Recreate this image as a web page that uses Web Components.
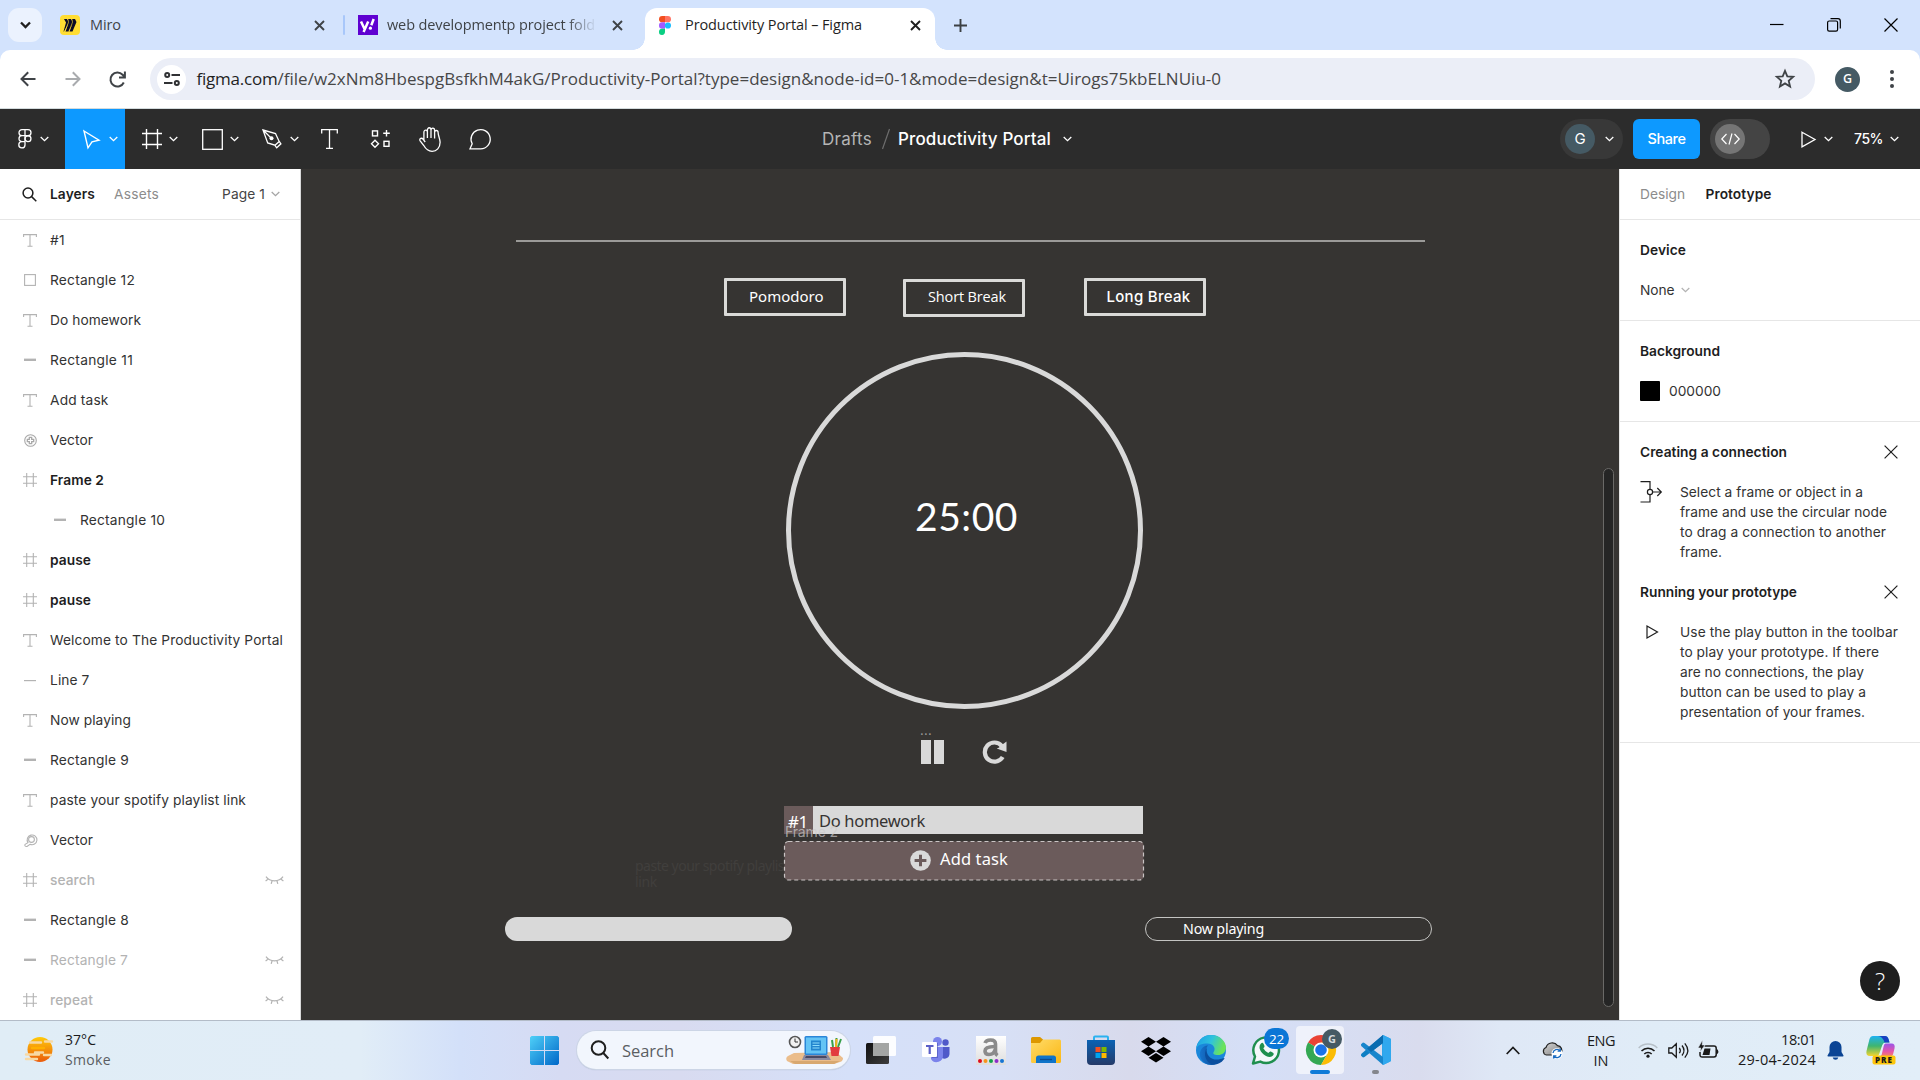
<!DOCTYPE html>
<html lang="en">
<head>
<meta charset="utf-8">
<title>Productivity Portal – Figma</title>
<style>
html,body{margin:0;padding:0;width:1920px;height:1080px;overflow:hidden;background:#fff}
</style>
</head>
<body>
<desktop-screen></desktop-screen>
<script>
const UI = '"Open Sans","Noto Sans",sans-serif';
const INTER = 'Inter,"Liberation Sans",sans-serif';
const NOTO = '"Noto Sans","Open Sans",sans-serif';
const FONTS = { ui: UI, inter: INTER, noto: NOTO, lato: 'Lato,sans-serif' };

/* Single line of text whose tracking is adjusted to a given advance width. */
class UiText extends HTMLElement {
  connectedCallback() {
    if (this.shadowRoot) return;
    const g = (n, d) => this.getAttribute(n) || d;
    const size = g('size', '14'), weight = g('weight', '400'), fam = FONTS[g('font', 'inter')];
    let ls = 0;
    const w = parseFloat(g('w', '0'));
    const t = this.textContent;
    if (w) {
      const c = UiText.ctx || (UiText.ctx = document.createElement('canvas').getContext('2d'));
      c.font = `${weight} ${size}px ${fam}`;
      ls = (w - c.measureText(t).width) / Math.max(1, t.length);
    }
    this.attachShadow({ mode: 'open' }).innerHTML = `<style>
      :host{display:block;flex:none;white-space:pre;line-height:20px;${w ? `width:${w}px;` : ''}
      font:${weight} ${size}px/20px ${fam};letter-spacing:${ls.toFixed(3)}px;${this.hasAttribute('color') ? `color:${g('color')}` : ''}}
      </style><slot></slot>`;
  }
}

const S = (c, w, d) => `<g fill="none" stroke="${c}" stroke-width="${w}">${d}</g>`;
const ICONS = {
  chev: [9, 6, S('currentColor', 1.3, '<path d="M.7 1 4.5 4.6 8.3 1"/>')],
  tabchev: [11, 8, S('#1f1f1f', 2.3, '<path d="M1 1.5 5.5 6 10 1.5"/>')],
  close: [11, 11, S('currentColor', 1.9, '<path d="M1 1 10 10M10 1 1 10"/>')],
  miro: [20, 20, '<rect width="20" height="20" rx="4" fill="#ffdd33"/><path d="M4 4h3l1.5 2L8 4h3l1.5 2L12 4h3l1.5 3-4 9.500h-3l3-8-4 8h-3l3-8.500-4.500 8.500H3.500l2.500-9z" fill="#0b0b26"/>' + S('#ffdd33', .6, '<path d="m7.600 4 1 3-3.500 9M11.600 4l1 3-3.500 9"/>')],
  yahoo: [20, 20, '<rect width="20" height="20" fill="#5f01d1"/>' + S('#fff', 2.5, '<path d="m3 6.500 3.300 7M10.200 6.500 5.600 17M15.700 4l-2.400 6.200"/>') + '<circle cx="12.400" cy="13.200" r="1.600" fill="#fff"/>'],
  figma: [12, 19, '<path d="M3.200 0H6v6.300H3.200a3.150 3.150 0 0 1 0-6.300z" fill="#f24e1e"/><path d="M6 0h2.800a3.150 3.150 0 0 1 0 6.300H6z" fill="#ff7262"/><path d="M3.200 6.300H6v6.400H3.200a3.200 3.200 0 0 1 0-6.400z" fill="#a259ff"/><circle cx="8.900" cy="9.500" r="3.100" fill="#1abcfe"/><path d="M3.200 12.700H6v3.100a3 3.100 0 1 1-2.800-3.100z" fill="#0acf83"/>'],
  plus: [13, 13, S('#3c4043', 1.9, '<path d="M6.500 0v13M0 6.500h13"/>')],
  wmin: [14, 14, S('#000', 1.2, '<path d="M0 6.500h13.500"/>')],
  wmax: [14, 14, S('#000', 1.2, '<rect x=".6" y="3" width="10" height="10.200" rx="1.600"/><path d="M3.500.7H11q2.300 0 2.300 2.300v7.500"/>')],
  wclose: [14, 14, S('#000', 1.2, '<path d="M.5.5 13.500 13.500M13.500.5.5 13.500"/>')],
  back: [16, 16, S('#3f4347', 2, '<path d="M15.500 8H1.800M8.200 1.200 1.500 8l6.700 6.800"/>')],
  fwd: [16, 16, S('#a9abae', 2, '<path d="M.5 8h13.700M7.800 1.200 14.500 8l-6.700 6.800"/>')],
  reload: [17, 17, S('#3f4347', 2, '<path d="M14.800 11.500A7 7 0 1 1 13.600 3.700L15.700 6M15.900.5v6H10"/>')],
  tune: [16, 14, S('#303134', 2, '<circle cx="3.200" cy="3" r="2"/><path d="M7.500 3H16M0 11h8.500"/><circle cx="12.800" cy="11" r="2"/>')],
  star: [20, 20, S('#3f4347', 1.8, '<path d="m10 1.800 2.300 5.500 5.900.5-4.500 3.900 1.400 5.800-5.100-3.100-5.100 3.100 1.400-5.800L1.800 7.800l5.900-.5z"/>')],
  dots: [4, 18, '<g fill="#3f4347"><circle cx="2" cy="2" r="2"/><circle cx="2" cy="9" r="2"/><circle cx="2" cy="16" r="2"/></g>'],
  flogo: [14, 20, S('#fff', 1.3, '<path d="M7 .7H4a2.900 2.900 0 0 0 0 6h3zM7 .7h3a2.900 2.900 0 0 1 0 6H7zM7 6.700H4a2.900 2.900 0 0 0 0 6h3zM7 12.700H4a3.100 3.100 0 1 0 3 3.200z"/><circle cx="10" cy="9.700" r="2.950"/>')],
  move: [17, 19, S('#fff', 1.4, '<path d="m1 1 15 9.200-7 1.600-4 6z"/>')],
  frame: [20, 20, S('#fff', 1.4, '<path d="M4.500 0v20M15.500 0v20M0 4.500h20M0 15.500h20"/>')],
  rect: [21, 21, S('#fff', 1.3, '<rect x=".7" y=".7" width="19.600" height="19.600"/>')],
  pen: [21, 20, S('#fff', 1.3, '<path d="m1 1 12.500 3.500 3.700 8-4.200 3.700-7.300-2.300zM1 1l7.800 7.800M17.400 12.600l1.500 2.200-4.200 4-2-2.600"/>') + '<circle cx="9.500" cy="9.300" r="2" fill="#fff"/>'],
  text: [17, 20, S('#fff', 1.3, '<path d="M.7 4.500V.7h15.600v3.800M8.500.7v18.600M5 19.300h7"/>')],
  res: [20, 18, S('#fff', 1.4, '<rect x="1.500" y=".9" width="5" height="5"/><path d="M15.500 0v6.600M12.200 3.300h6.600M4 10.300l3.500 3.500L4 17.300.5 13.800z"/><rect x="13" y="11.300" width="5" height="5"/>')],
  hand: [22, 25, S('#fff', 1.3, '<path d="M4.900 13V5.200c0-2.800 3.500-2.800 3.500 0V11 3c0-3 3.600-3 3.600 0v8V3.200c0-2.900 3.600-2.900 3.600 0V11.500 5.600c0-2.800 3.500-2.800 3.500 0 0 3 2 6.500 2 9.700 0 5.500-3.500 9-8 9-4 0-6.500-2.500-8.300-5.800L1 13.600c-1-2.200 1.800-3.300 3.200-1.300l2 2.700"/>')],
  comment: [22, 21, S('#fff', 1.3, '<path d="M3.200 14.800A9.600 9.600 0 1 1 11.700 19.800H1l2.200-5z"/>')],
  slash: [8, 20, S('#6e6e6e', 1.2, '<path d="M7.500 0 .5 20"/>')],
  code: [19, 12, S('#fff', 1.2, '<path d="M5.500 1 .8 6l4.700 5M13.500 1l4.700 5-4.700 5M11 .5 8 11.500"/>')],
  play: [15, 17, S('currentColor', 1.3, '<path d="M1 1.200 14 8.500 1 15.800z"/>')],
  mag: [15, 15, S('#1e1e1e', 1.5, '<circle cx="6" cy="6" r="4.900"/><path d="m9.600 9.600 4.700 4.700"/>')],
  lt: [14, 13, S('#b3b3b3', 1.1, '<path d="M.6 3V.6h12.800V3M7 .6v11.800M4.500 12.300h5"/>')],
  lsq: [12, 12, S('#b3b3b3', 1.1, '<rect x=".6" y=".6" width="10.800" height="10.800"/>')],
  lbar: [12, 4, '<rect y=".6" width="12" height="2.400" fill="#b3b3b3"/>'],
  lline: [12, 3, '<rect y="1" width="12" height="1.200" fill="#b3b3b3"/>'],
  lvec: [13, 13, S('#a8a8a8', 1.1, '<circle cx="6.500" cy="6.500" r="5.800"/><path d="M5.300 3.300h2.400v2h2v2.400h-2v2H5.300v-2h-2V5.300h2z" stroke-width="1.300"/>')],
  lhash: [14, 14, S('#b3b3b3', 1.1, '<path d="M3.700 0v14M10.300 0v14M0 3.700h14M0 10.300h14"/>')],
  lmag: [13, 13, S('#b3b3b3', 1.1, '<circle cx="7.500" cy="5.500" r="2.900"/><path d="M4 8.600a4.900 4.900 0 1 1 2 1.700l-3 2.100c-1.600.5-2.700-.9-1.900-2z"/>')],
  eye: [19, 8, S('#b3b3b3', 1.2, '<path d="M1 .7C5 6.200 14 6.200 18 .7M3.300 3 .6 5M7 5 6.200 7.800M12 5l.8 2.800M15.700 3l2.700 2"/>')],
  x: [14, 14, S('#1e1e1e', 1.2, '<path d="m.6.6 12.800 12.800M13.400.6.6 13.400"/>')],
  conn: [22, 22, S('#1e1e1e', 1.2, '<path d="M.5.700H10v7.600M10 13.700V21H.5M12.700 11h8.500M17.300 7l4 4-4 4"/><circle cx="10" cy="11" r="2.600"/>')],
  playsm: [13, 14, S('#1e1e1e', 1.2, '<path d="M1 1v12l10.500-6z"/>')],
  reset: [24, 24, S('#d9d9d9', 4.200, '<path d="M19.700 17A9.600 9.600 0 1 1 18.700 5.800"/>') + '<path d="M23.500 1.500v10.600l-9.800-3.600 2.500-1 .8-2.300 3.500-1.500z" fill="#d9d9d9"/>'],
  addc: [21, 21, '<circle cx="10.500" cy="10.500" r="10.300" fill="#d9d9d9"/><path d="M9 4.700h3V9h4.400v3H12v4.300H9V12H4.600V9H9z" fill="#6b5b5b"/>'],
  smoke: [28, 28, '<defs><linearGradient id="a" x2="0" y2="1"><stop stop-color="#ffca0a"/><stop offset="1" stop-color="#ea5b0c"/></linearGradient></defs><circle cx="15" cy="13.500" r="12.500" fill="url(#a)"/><g stroke="#f7d9a5" stroke-width="2.400" stroke-linecap="round"><path d="M5 6.500h11M20 5.500h7M10 16.500h8M1 18.500h13M19 19h7M1 23h11"/><path d="M7 12h12" stroke="#ffb000"/></g>'],
  start: [29, 29, '<defs><linearGradient id="a" x2="1" y2="1"><stop stop-color="#4fd0f8"/><stop offset="1" stop-color="#0067c8"/></linearGradient></defs><path d="M1.500 0H14v14H0V1.500zM15 0h12.500L29 1.500V14H15zM0 15h14v14H1.500L0 27.500zM15 15h14v12.500L27.500 29H15z" fill="url(#a)"/>'],
  wsearch: [20, 20, S('#1f1f1f', 2, '<circle cx="8.500" cy="8" r="6.800"/><path d="m13.300 13 5 5.500"/>')],
  desk: [58, 30, '<path d="m8 18 42-1 7 6q0 3-3 4l-6 2H7l-6-3q-2-3 1-5z" fill="#ebbd8b"/><path d="M4 26h50l-6 3H9z" fill="#d8a870"/><rect x="18.500" y="1" width="23" height="19" rx="1.500" fill="#2a86d8"/><rect x="20" y="2.500" width="20" height="16" fill="#64c4f5"/><rect x="25" y="5.500" width="10" height="10" fill="#2386cf"/><path d="M26.500 8h7M26.500 10.500h7M26.500 13h7" stroke="#8edcfb"/><path d="M18 20h24l3 5H16z" fill="#8a8aa0"/><path d="M20 21h20l1 2H19z" fill="#4a4963"/><circle cx="9" cy="7" r="5.500" fill="#f1f1f1" stroke="#555" stroke-width="1.600"/><path d="M9 3.500V7h3" stroke="#333" fill="none"/><path d="M44 12h10l-1.500 9h-7z" fill="#e23b3f"/><path d="m47 12-1-7M50 12l.5-9M52 12l3-8" stroke-width="2" stroke="#37a04a"/><path d="m50 12 .5-8" stroke="#f3b21b" stroke-width="2"/>'],
  taskview: [30, 30, '<defs><linearGradient id="a" x2="1" y2="1"><stop stop-color="#111"/><stop offset="1" stop-color="#3d3d3d"/></linearGradient></defs><rect y="8" width="23" height="21" rx="1.500" fill="url(#a)"/><rect x="7" y="1" width="23" height="20" rx="1.500" fill="#fff" opacity=".92"/><rect x="7" y="8" width="16" height="13" fill="#a3a5a4"/>'],
  teams: [28, 26, '<circle cx="15.500" cy="4.500" r="4.500" fill="#7b83eb"/><circle cx="23.500" cy="5.500" r="3.200" fill="#5059c9"/><path d="M18 10h9.500v7a5 5 0 0 1-7.500 4z" fill="#5059c9"/><path d="M9 10h12v8a6.500 6.500 0 0 1-12 4z" fill="#7b83eb"/><path d="M10 6h6v15h-6z" fill="#4249b0" opacity=".5"/><rect y="5" width="15" height="15" rx="1" fill="#fff"/><path d="M4 9h7.500M7.700 9v8" stroke="#5b5fc7" stroke-width="2.200"/>'],
  amz: [30, 29, '<defs><linearGradient id="a" x2="0" y2="1"><stop stop-color="#fff"/><stop offset="1" stop-color="#ddd"/></linearGradient></defs><rect width="30" height="29" fill="url(#a)"/><g fill="none" stroke="#8b8b8b" stroke-width="3.600"><path d="M9 7q1-3 5.500-3 5 0 5 4v8q0 2 2 3.500"/><path d="M19 10.500q-10 0-10 4.500 0 3.500 4 3.500 5 0 6-5"/></g><circle cx="4" cy="25" r="2" fill="#e00b1c"/><circle cx="9.500" cy="25" r="2" fill="#f7941d"/><circle cx="15" cy="25" r="2" fill="#13a34a"/><circle cx="20.500" cy="25" r="2" fill="#8e2ec9"/><circle cx="26" cy="25" r="2" fill="#1575d4"/>'],
  folder: [30, 26, '<defs><linearGradient id="a" x2="1" y2="1"><stop stop-color="#ffdc69"/><stop offset="1" stop-color="#fbb714"/></linearGradient></defs><path d="M0 1.500Q0 0 1.500 0H9l3 2.500V8H0z" fill="#dd9800"/><path d="M0 6h9l3-3.500h16.500Q30 2.500 30 4v20.500q0 1.500-1.500 1.500h-27Q0 26 0 24.500z" fill="url(#a)"/><path d="M5 26v-5q0-2.500 2.500-2.500h15q2.500 0 2.500 2.500v5z" fill="#0f74c9"/><path d="M9 22.500h12" stroke="#0b4b8f" stroke-width="1.300"/>'],
  store: [30, 30, '<defs><linearGradient id="a" x2="0" y2="1"><stop stop-color="#0a62b4"/><stop offset="1" stop-color="#253a68"/></linearGradient></defs><path d="M8 6V2.500Q8 1.500 9 1.500h12q1 0 1 1V6" fill="none" stroke="#2bb2f0" stroke-width="2"/><path d="M1 5h28v21q0 4-4 4H5q-4 0-4-4z" fill="url(#a)"/><path d="M9.500 12h5v5h-5z" fill="#f25022"/><path d="M15.500 12h5v5h-5z" fill="#7fba00"/><path d="M9.500 18h5v5h-5z" fill="#00a4ef"/><path d="M15.500 18h5v5h-5z" fill="#ffb900"/>'],
  dropbox: [30, 26, '<path d="m7.500 0 7.500 4.700-7.500 4.700L0 4.700zM22.500 0 30 4.700l-7.500 4.700L15 4.700zM7.500 9.500l7.500 4.800L7.500 19 0 14.300zM22.500 9.500l7.500 4.800-7.500 4.700-7.500-4.700zM15 16l7.500 4.700L15 25.500l-7.500-4.800z" fill="#000"/>'],
  edge: [30, 30, '<defs><linearGradient id="a" x2="1" y2=".3"><stop stop-color="#1a9be8"/><stop offset=".55" stop-color="#2fc3dc"/><stop offset="1" stop-color="#6be35a"/></linearGradient><linearGradient id="b" x2="1"><stop stop-color="#1673cc"/><stop offset="1" stop-color="#0c4a96"/></linearGradient></defs><circle cx="15" cy="15" r="15" fill="#1a87da"/><path d="M0 14.500C1 6 7 0 15 0c9 0 15 6.500 15 12.500 0 5-4 7.500-8 7.500-4.500 0-5.500-1.500-4.200-3.200 2.500-4-1-8.300-6.300-8.300C6 8.500 1 10 0 14.500z" fill="url(#a)"/><path d="M10.500 13.500C8 21 13 29 21 28.800 15 31.500 6 29.500 4 21c-1-5 3-11 8-10.500-1 .8-1.300 2-1.500 3z" fill="url(#b)"/><path d="M10.800 13c-1.500 7 4.700 12.500 11.700 11.500 2.500-.4 4.500-1.300 5.500-1.500.9 0 .4.800 0 1.300C25 28.500 20 30 17 29.500 9.500 28 7 18.500 10.800 13z" fill="#0b4f9e"/>'],
  wa: [30, 30, '<path d="M2 28.500 4 21.500A12.800 12.800 0 1 1 9.300 26.600z" fill="#f4f8fb" stroke="#1f8f4e" stroke-width="2.500" stroke-linejoin="round"/><path d="M10 8.500q1.500-1.500 2.500.3l1 2.200q.3 1-1.200 2.300 2 3.700 5 4.700 1.500-2 2.500-1.400l2.200 1.200q1.400.8 0 2.700-2.500 2.800-7 .5-5-2.700-6.300-7.200-.7-3.500 1.300-5.300z" fill="#1f8f4e"/>'],
  chrome: [30, 30, '<path d="M15 15 2 7.500A15 15 0 0 1 28 7.500L15 8z" fill="#ea4335"/><path d="M15 15 2 7.500A15 15 0 0 0 15 30l6.500-11.300z" fill="#34a853"/><path d="M15 15l6.500 3.700L15 30A15 15 0 0 0 28 7.500H15z" fill="#fbbc04"/><circle cx="15" cy="15" r="7.500" fill="#fff"/><circle cx="15" cy="15" r="5.800" fill="#1a73e8"/>'],
  vscode: [30, 30, '<path d="m22 0 7 3.300q1 .6 1 1.700v20q0 1.100-1 1.700L22 30l-1-3.500v-23z" fill="#2ba4ea"/><path d="M22 0v8L3.500 22 2 22.500 0 20.700l.2-1.700z" fill="#0f7fc4"/><path d="M22 30v-8L3.500 8 2 7.500 0 9.300l.2 1.700z" fill="#1785cc"/><path d="M22 0v8L10 17 6 13.500z" fill="#0a6cb0"/><path d="M22 0 30 4v22l-8 4z" fill="#30a8ee"/>'],
  up: [14, 9, S('#1a1a1a', 1.700, '<path d="m.7 8 6.300-6.500L13.300 8"/>')],
  cloud: [21, 18, '<defs><linearGradient id="a" x2="1" y2="1"><stop stop-color="#d6d6d6"/><stop offset="1" stop-color="#7f7f7f"/></linearGradient></defs><path d="M4.500 14A3.900 3.900 0 0 1 4 6.500 6.500 6.500 0 0 1 15.500 4.600 4.700 4.700 0 0 1 19 12l-2 2z" fill="url(#a)" stroke="#222" stroke-width="1.200"/><circle cx="15" cy="12.500" r="5.500" fill="#fff"/>' + S('#1769c0', 1.300, '<path d="M11 12a4 4 0 0 1 7-2.200M19 13a4 4 0 0 1-7 2.200M18.300 7.500v2.700h-2.700M11.700 17.500v-2.700h2.700"/>')],
  wifi: [20, 15, S('#b7c0c8', 1.500, '<path d="M.7 5a13 13 0 0 1 18.600 0"/>') + S('#1a1a1a', 1.500, '<path d="M3.500 8a9 9 0 0 1 13 0M6.300 11a5.200 5.200 0 0 1 7.400 0"/>') + '<circle cx="10" cy="13.200" r="1.600" fill="#1a1a1a"/>'],
  vol: [21, 17, S('#1a1a1a', 1.300, '<path d="M.8 6h3l4.500-4.200v13.400L3.800 11h-3zM11.300 5.800q2 2.700 0 5.400M14 3.500q4 5 0 10M16.800 1.300q6 7.200 0 14.400"/>')],
  bat: [21, 18, S('#1a1a1a', 1.500, '<path d="M6.500 5H16q2.200 0 2.200 2.200v6.600q0 2.200-2.200 2.200H4.200Q2 16 2 13.800V11"/>') + '<path d="M18.500 8.500h1.200q1.300 2 0 4.300h-1.200zM6.500 7.500h6l-1 6.500h-7z" fill="#1a1a1a"/><path d="M4.500-1 0 7h2.800L2 11l5-7H4.200z" fill="#1a1a1a" stroke="#e2ecf7" stroke-width=".6"/>'],
  bell: [17, 19, '<path d="M8.500 0a6 6 0 0 1 6 6v5l2 3.500q.3 1-.8 1H1.300q-1.100 0-.8-1l2-3.500V6a6 6 0 0 1 6-6zM5.700 16.500h5.600q-.5 2.300-2.800 2.300t-2.800-2.300z" fill="#0b4494"/>'],
  copilot: [30, 29, '<defs><linearGradient id="a" x2="0" y2="1"><stop stop-color="#1db2f2"/><stop offset=".5" stop-color="#3fb56f"/><stop offset="1" stop-color="#f3d530"/></linearGradient><linearGradient id="b" x2="0" y2="1"><stop stop-color="#9a55e8"/><stop offset=".6" stop-color="#e755a8"/><stop offset="1" stop-color="#f58a5c"/></linearGradient></defs><path d="M7 0h12q2.500 0 3.500 3l1 3.500h-4q-2.500 0-3.300 2.700L13 18.500q-.7 1.500-2.500 1.500H4q-4.500 0-3.500-5L3.500 3Q4.500 0 7 0z" fill="url(#a)"/><path d="M12 0h7q2.500 0 3.500 3l1 3.500h-5q-2-6.500-6.500-6.500z" fill="#1840c0"/><path d="M19.500 7.500h6q4 0 3 5L27 18.500q-1 2.500-3.500 2.500H13q2 0 2.700-2.500l2-8.500q.5-2.500 1.800-2.500z" fill="url(#b)"/><rect x="6.500" y="19.500" width="23" height="9" rx="2" fill="#fdc60b"/>'],
};
class UiIcon extends HTMLElement {
  connectedCallback() {
    if (this.shadowRoot) return;
    const [w, h, body] = ICONS[this.getAttribute('name')];
    this.attachShadow({ mode: 'open' }).innerHTML =
      `<style>:host{display:block;flex:none;width:${w}px;height:${h}px}svg{display:block;overflow:visible}</style>
       <svg width="${w}" height="${h}" viewBox="0 0 ${w} ${h}">${body}</svg>`;
  }
}

const component = (tag, css, html) => customElements.define(tag, class extends HTMLElement {
  connectedCallback() {
    if (this.shadowRoot) return;
    const t = document.createElement('template');
    t.innerHTML = `<style>*{box-sizing:border-box}:host{box-sizing:border-box}${css}</style>${typeof html === 'function' ? html(this) : html}`;
    this.attachShadow({ mode: 'open' }).append(t.content.cloneNode(true));
  }
});

customElements.define('ui-text', UiText);
customElements.define('ui-icon', UiIcon);

component('user-badge', `:host{display:grid;place-items:center;flex:none;border-radius:50%;background:#455a64;color:#fff}`, '<slot></slot>');

component('browser-tabs', `
:host{display:flex;height:50px;background:#d3e3fd;align-items:center;padding-left:8px;color:#3f4347}
.find{width:34px;height:34px;border-radius:11px;background:#ebf2fe;display:grid;place-items:center}
.tab{display:flex;align-items:center;height:34px}
.t1{width:283px;padding-left:18px}
.t1 ui-text{margin:0 auto 0 10px}
.sep{width:2px;height:20px;background:#a8c7fa;border-radius:1px;margin-left:18px}
.fade{width:210px;overflow:hidden;margin:0 15px 0 9px;-webkit-mask:linear-gradient(90deg,#000 180px,transparent 210px);mask:linear-gradient(90deg,#000 180px,transparent 210px)}
.t2{padding-left:13px;width:300px}
.active{position:relative;align-self:flex-end;height:42px;width:290px;background:#fff;border-radius:12px 12px 0 0;padding:0 14px 8px;color:#1f1f1f}
.active:before,.active:after{content:"";position:absolute;bottom:0;width:12px;height:12px}
.active:before{left:-12px;background:radial-gradient(circle at 0 0,transparent 11.5px,#fff 12px)}
.active:after{right:-12px;background:radial-gradient(circle at 100% 0,transparent 11.500px,#fff 12px)}
.active ui-text{margin:0 auto 0 14px}
.new{margin-left:19px}
.win{display:flex;gap:43px;margin:0 22px 0 auto}`,
`<div class="find"><ui-icon name="tabchev"></ui-icon></div>
<div class="tab t1"><ui-icon name="miro"></ui-icon><ui-text font="ui" size="14.500" w="31">Miro</ui-text><ui-icon name="close"></ui-icon></div>
<div class="sep"></div>
<div class="tab t2"><ui-icon name="yahoo"></ui-icon><div class="fade"><ui-text font="ui" size="14.500" w="208">web developmentp project fold</ui-text></div><ui-icon name="close"></ui-icon></div>
<div class="tab active"><ui-icon name="figma"></ui-icon><ui-text font="ui" size="14.500" w="177">Productivity Portal – Figma</ui-text><ui-icon name="close"></ui-icon></div>
<ui-icon class="new" name="plus"></ui-icon>
<div class="win"><ui-icon name="wmin"></ui-icon><ui-icon name="wmax"></ui-icon><ui-icon name="wclose"></ui-icon></div>`);

component('address-bar', `
:host{display:block;background:#d3e3fd;height:59px}
.bar{height:59px;background:#fff;border-radius:10px 10px 0 0;border-bottom:1px solid #d3dbdd;display:flex;align-items:center;padding:0 26px 0 20px}
.nav{display:flex;gap:28.500px;width:130px}
.box{display:flex;align-items:center;height:42px;width:1665px;border-radius:21px;background:#ebeef7;padding:0 20px 0 7px}
.site{width:29px;height:29px;border-radius:50%;background:#fff;display:grid;place-items:center;margin-right:10.500px}
.url{display:flex;color:#474747}
ui-icon[name=star]{margin-left:auto}
user-badge{width:25px;height:25px;margin-left:20px}
ui-icon[name=dots]{margin-left:auto}`,
`<div class="bar"><div class="nav"><ui-icon name="back"></ui-icon><ui-icon name="fwd"></ui-icon><ui-icon name="reload"></ui-icon></div>
<div class="box"><div class="site"><ui-icon name="tune"></ui-icon></div>
<div class="url"><ui-text font="ui" size="17" w="81" color="#1f1f1f">figma.com</ui-text><ui-text font="ui" size="17" w="943.500">/file/w2xNm8HbespgBsfkhM4akG/Productivity-Portal?type=design&amp;node-id=0-1&amp;mode=design&amp;t=Uirogs75kbELNUiu-0</ui-text></div>
<ui-icon name="star"></ui-icon></div>
<user-badge><ui-text font="ui" size="12.500" weight="600">G</ui-text></user-badge><ui-icon name="dots"></ui-icon></div>`);

component('tool-button', `
:host{display:flex;width:60px;height:60px;align-items:center;justify-content:center;gap:7px;color:#fff;padding-left:10px}
:host([solo]){width:50px;padding:0}
:host([icon=text]){padding-right:2px}
:host([icon=res]){padding-left:2px}
:host([logo]){width:65px;padding-left:18px;justify-content:flex-start;gap:8px}
:host([active]){background:#0d99ff;padding-left:10px;gap:9px}`,
el => `<ui-icon name="${el.getAttribute('icon')}"></ui-icon>${el.hasAttribute('solo') ? '' : '<ui-icon name="chev"></ui-icon>'}`);

component('figma-toolbar', `
:host{display:flex;height:60px;background:#2c2c2c;color:#fff;align-items:center}
.tools,.file,.right{display:flex;align-items:center}
.tools{width:822px}
.file ui-icon[name=slash]{margin:0 8px 0 10px}.file ui-icon[name=chev]{margin-left:12px}
.right{margin-left:auto;padding-right:21px}
.who{width:63px;height:40px;border-radius:20px;background:#383838;display:flex;align-items:center;padding-left:5px;gap:10px}
user-badge{width:30px;height:30px}
.share{width:67px;height:40px;border-radius:6px;background:#0d99ff;display:grid;place-items:center;margin:0 10px}
.dev{width:60px;height:40px;border-radius:20px;background:#444;padding:5px;margin-right:31px}
.knob{width:30px;height:30px;border-radius:50%;background:#757575;display:grid;place-items:center}
.right>ui-icon[name=play]{margin-right:8px}.right>ui-text{margin:0 7px 0 21px}`,
`<div class="tools"><tool-button logo icon="flogo"></tool-button><tool-button active icon="move"></tool-button><tool-button icon="frame"></tool-button><tool-button icon="rect"></tool-button><tool-button icon="pen"></tool-button><tool-button solo icon="text"></tool-button><tool-button solo icon="res"></tool-button><tool-button solo icon="hand"></tool-button><tool-button solo icon="comment"></tool-button></div>
<div class="file"><ui-text size="17" w="50" color="#b5b5b5">Drafts</ui-text><ui-icon name="slash"></ui-icon><ui-text size="17" weight="500" w="153">Productivity Portal</ui-text><ui-icon name="chev"></ui-icon></div>
<div class="right"><div class="who"><user-badge><ui-text size="15">G</ui-text></user-badge><ui-icon name="chev"></ui-icon></div>
<div class="share"><ui-text size="14.500" weight="500" w="38">Share</ui-text></div>
<div class="dev"><div class="knob"><ui-icon name="code"></ui-icon></div></div>
<ui-icon name="play"></ui-icon><ui-icon name="chev"></ui-icon><ui-text size="14" weight="500" w="29">75%</ui-text><ui-icon name="chev"></ui-icon></div>`);

component('layer-row', `
:host{display:flex;height:40px;align-items:center;padding:0 16px 0 20px;color:#333}
:host([frame]){color:#1e1e1e}
:host([nested]){padding-left:50px}
:host([off]){color:#b3b3b3}
.ic{width:20px;display:grid;place-items:center;margin-right:10px}
ui-icon[name=eye]{margin-left:auto}`,
el => `<div class="ic"><ui-icon name="${el.getAttribute('icon')}"></ui-icon></div>
<ui-text size="13.750" weight="${el.hasAttribute('frame') ? (el.hasAttribute('off') ? 500 : 600) : 400}" w="${el.getAttribute('w')}">${el.getAttribute('label')}</ui-text>${el.hasAttribute('off') ? '<ui-icon name="eye"></ui-icon>' : ''}`);

const LAYERS = [
  ['lt', '#1', 15], ['lsq', 'Rectangle 12', 85], ['lt', 'Do homework', 91], ['lbar', 'Rectangle 11', 83],
  ['lt', 'Add task', 58.500], ['lvec', 'Vector', 43], ['lhash', 'Frame 2', 54, 'frame'], ['lbar', 'Rectangle 10', 85, 'nested'],
  ['lhash', 'pause', 41, 'frame'], ['lhash', 'pause', 41, 'frame'], ['lt', 'Welcome to The Productivity Portal', 233],
  ['lline', 'Line 7', 39.500], ['lt', 'Now playing', 81], ['lbar', 'Rectangle 9', 79], ['lt', 'paste your spotify playlist link', 196],
  ['lmag', 'Vector', 43], ['lhash', 'search', 45, 'frame off'], ['lbar', 'Rectangle 8', 79], ['lbar', 'Rectangle 7', 78, 'off'],
  ['lhash', 'repeat', 43, 'frame off']];
component('layers-panel', `
:host{display:flex;flex-direction:column;width:301px;background:#fff;border-right:1px solid #d9d9d9;overflow:hidden}
header{display:flex;align-items:center;height:51px;border-bottom:1px solid #e6e6e6;padding:0 20px 0 22px;flex:none}
header ui-text:nth-of-type(1){margin-left:13px}
header ui-text:nth-of-type(2){margin-left:19px}
header ui-text:nth-of-type(3){margin:0 6px 0 auto}
header ui-icon[name=chev]{color:#a5a5a5}`,
`<header><ui-icon name="mag"></ui-icon><ui-text size="13.750" weight="600" w="45" color="#1e1e1e">Layers</ui-text><ui-text size="13.750" w="45" color="#8c8c8c">Assets</ui-text><ui-text size="13.750" w="43" color="#444">Page 1</ui-text><ui-icon name="chev"></ui-icon></header>`
+ LAYERS.map(([i, l, w, f = '']) => `<layer-row icon="${i}" label="${l}" w="${w}" ${f}></layer-row>`).join(''));

component('tip-card', `
:host{display:block}
.h{display:flex;align-items:center;justify-content:space-between;height:20px}
.b{display:flex;margin-top:20px}
.i{width:40px;flex:none;height:20px;display:flex;align-items:center}`,
el => `<div class="h"><ui-text size="13.750" weight="600" color="#1e1e1e" w="${el.getAttribute('w')}">${el.getAttribute('heading')}</ui-text><ui-icon name="x"></ui-icon></div>
<div class="b"><div class="i"><slot name="icon"></slot></div><div><slot></slot></div></div>`);

component('prototype-panel', `
:host{display:block;width:301px;background:#fff;border-left:1px solid #e6e6e6;color:#333}
section{border-bottom:1px solid #e6e6e6;padding:20px}
.tabs{display:flex;height:51px;padding:0 0 0 20px;align-items:center;gap:20.500px}
.group{height:101px;display:flex;flex-direction:column;gap:20px}
.group>div{display:flex;align-items:center;height:20px}
.group ui-icon{margin-left:6px;color:#b3b3b3}
.sw{width:20px;height:20px;background:#000;margin-right:9px;border-radius:1px}
.tips{height:321px;display:flex;flex-direction:column;gap:20px;padding:20px 22px 20px 20px}`,
`<section class="tabs"><ui-text size="13.750" w="45" color="#8c8c8c">Design</ui-text><ui-text size="13.750" weight="600" w="66" color="#1e1e1e">Prototype</ui-text></section>
<section class="group"><div><ui-text size="13.750" weight="600" w="46" color="#1e1e1e">Device</ui-text></div><div><ui-text size="13.750" w="34.500">None</ui-text><ui-icon name="chev"></ui-icon></div></section>
<section class="group"><div><ui-text size="13.750" weight="600" w="80" color="#1e1e1e">Background</ui-text></div><div><div class="sw"></div><ui-text size="13.750" w="52">000000</ui-text></div></section>
<section class="tips">
<tip-card heading="Creating a connection" w="147"><ui-icon slot="icon" name="conn"></ui-icon>
<ui-text size="13.750" w="183">Select a frame or object in a</ui-text><ui-text size="13.750" w="207">frame and use the circular node</ui-text><ui-text size="13.750" w="206">to drag a connection to another</ui-text><ui-text size="13.750" w="42">frame.</ui-text></tip-card>
<tip-card heading="Running your prototype" w="157"><ui-icon slot="icon" name="playsm" style="margin-left:5.500px"></ui-icon>
<ui-text size="13.750" w="218">Use the play button in the toolbar</ui-text><ui-text size="13.750" w="199">to play your prototype. If there</ui-text><ui-text size="13.750" w="184">are no connections, the play</ui-text><ui-text size="13.750" w="186">button can be used to play a</ui-text><ui-text size="13.750" w="185">presentation of your frames.</ui-text></tip-card>
</section>`);

/* Free canvas: coordinates below are relative to the canvas' own origin. */
component('design-canvas', `
:host{display:block;position:relative;width:1318px;height:851px;background:#363432;overflow:hidden;color:#fff}
.rule,.btn,.ring,.bar,.task,.num,.scroll,.pill,svg,ui-text,ui-icon{position:absolute}
.rule{left:215px;top:71px;width:909px;height:2px;background:#9b9a98}
.btn{width:122px;height:38px;border:3px solid #dadad8;border-radius:1px}
.ring{left:485px;top:183px;width:357px;height:357px;border:5.500px solid #d9d9d9;border-radius:50%}
.bar{top:571px;width:10px;height:24px;background:#d9d9d9}
.task{left:512px;top:637px;width:330px;height:28px;background:#d9d9d9}
.num{left:483px;top:637px;width:29px;height:28px;background:#6b5b5b}
.pill{top:748px;height:24px;border-radius:12px}
.scroll{left:1302px;top:299px;width:11px;height:539px;border:1.500px solid #6a6967;border-radius:6px;background:#252525}
svg{left:482px;top:671px}`,
`<div class="rule"></div>
<div class="btn" style="left:423px;top:109px"></div><div class="btn" style="left:602px;top:110px"></div><div class="btn" style="left:783px;top:109px"></div>
<ui-text style="left:448px;top:117px" font="noto" size="15" w="74.500">Pomodoro</ui-text>
<ui-text style="left:627px;top:117.500px" font="ui" size="14.500" w="78">Short Break</ui-text>
<ui-text style="left:805.500px;top:118px" font="inter" size="15" weight="500" w="84">Long Break</ui-text>
<div class="ring"></div>
<ui-text style="left:614px;top:337px" font="lato" weight="400" size="39" w="103">25:00</ui-text>
<ui-text style="left:619px;top:551px" font="inter" size="13" w="12" color="#999">...</ui-text>
<div class="bar" style="left:620px"></div><div class="bar" style="left:633px"></div>
<ui-icon style="left:681.500px;top:571px" name="reset"></ui-icon>
<ui-text style="left:334px;top:687px" font="noto" size="14" w="149" color="#413f3d">paste your spotify playlis</ui-text>
<ui-text style="left:334px;top:703px" font="noto" size="14" w="22" color="#413f3d">link</ui-text>
<div class="num"></div><div class="task"></div>
<ui-text style="left:487px;top:642.500px" font="noto" size="17" w="19.500">#1</ui-text>
<ui-text style="left:518px;top:641.500px" font="noto" size="16.500" w="106" color="#363432">Do homework</ui-text>
<ui-text style="left:484px;top:653px" font="inter" size="14" w="53" color="rgba(205,203,203,.7)">Frame 2</ui-text>
<svg width="362" height="42"><rect x="1.500" y="1.500" width="359" height="38.500" rx="4" fill="#6b5b5b" stroke="#c9c4c4" stroke-width="1.200" stroke-dasharray="4 3"/></svg>
<ui-icon style="left:608.500px;top:681px" name="addc"></ui-icon>
<ui-text style="left:639px;top:680px" font="noto" size="16.500" w="68">Add task</ui-text>
<div class="pill" style="left:204px;width:287px;background:#d9d9d9"></div>
<div class="pill" style="left:843.500px;width:287.500px;border:1.300px solid #c4c4c2"></div>
<ui-text style="left:882px;top:749.500px" font="noto" size="14.250" w="81">Now playing</ui-text>
<div class="scroll"></div>`);

component('task-app', `
:host{display:grid;place-items:center;width:55px;height:60px;position:relative}
:host([open]):before{content:"";position:absolute;left:3px;top:6px;width:48px;height:48px;border-radius:4px;background:rgba(255,255,255,.6)}
ui-icon{position:relative}
:host([open]):after{content:"";position:absolute;left:17px;bottom:6px;width:20px;height:4px;border-radius:2px;background:#0f7bd8}
:host([idle]):after{content:"";position:absolute;left:24px;bottom:6px;width:7px;height:4px;border-radius:2px;background:#84868c}`,
el => `<ui-icon name="${el.getAttribute('icon')}"></ui-icon><slot></slot>`);

component('windows-taskbar', `
:host{display:flex;height:60px;align-items:center;box-shadow:inset 0 1px #b3bcc8;background:linear-gradient(90deg,#e0edf6 0,#e1edf7 360px,#d3e0f9 460px,#d6dbf3 560px,#d8dbf0 680px,#d5e0f9 850px,#d7e0f6 1000px,#d8daec 1130px,#d5dff7 1250px,#d9dcee 1420px,#dfe8f6 1500px,#e0ecf7 1650px,#e2eef8 1920px);color:#1b1b1b}
.weather{display:flex;align-items:center;padding-left:25px;width:530px;gap:12px}
.search{display:flex;align-items:center;width:273px;height:38px;border-radius:19px;background:#f2f6fd;box-shadow:0 0 0 1px #ccd5e6,0 1px 1px #9aa8bd;margin:0 3px 0 18px;padding:0 6px 0 13px}
.search ui-text{margin:1px 0 0 12px}.search ui-icon[name=desk]{margin-left:auto}
.apps{display:flex}
.badge{position:absolute;left:26px;top:8px;height:21px;width:25px;border-radius:11px;background:#0a76d6;color:#fff;display:grid;place-items:center}
user-badge{position:absolute;left:29px;top:9px;width:20px;height:20px}
.tray{display:flex;align-items:center;margin-left:auto;padding-right:24px}
.c{display:flex;flex-direction:column;align-items:center;padding-top:1px}.r{display:flex;flex-direction:column;align-items:flex-end}
.co{position:relative}.co ui-text{position:absolute;left:9px;top:14px}`,
`<div class="weather"><ui-icon name="smoke"></ui-icon><div><ui-text font="ui" size="14" w="31">37°C</ui-text><ui-text font="ui" size="14" w="46" color="#5a5d62">Smoke</ui-text></div></div>
<ui-icon name="start"></ui-icon>
<div class="search"><ui-icon name="wsearch"></ui-icon><ui-text font="ui" size="16.500" w="52" color="#5b5e63">Search</ui-text><ui-icon name="desk"></ui-icon></div>
<div class="apps"><task-app icon="taskview"></task-app><task-app icon="teams"></task-app><task-app icon="amz"></task-app><task-app icon="folder"></task-app><task-app icon="store"></task-app><task-app icon="dropbox"></task-app><task-app icon="edge"></task-app>
<task-app icon="wa"><div class="badge"><ui-text font="ui" size="13.500" w="15">22</ui-text></div></task-app>
<task-app icon="chrome" open><user-badge><ui-text font="ui" size="11" weight="700" color="#d5dadd">G</ui-text></user-badge></task-app>
<task-app icon="vscode" idle></task-app></div>
<div class="tray"><ui-icon name="up"></ui-icon><ui-icon name="cloud" style="margin-left:22px"></ui-icon>
<div class="c" style="margin:0 23px 0 24px"><ui-text font="ui" size="14.500" w="28">ENG</ui-text><ui-text font="ui" size="14.500" w="15">IN</ui-text></div>
<ui-icon name="wifi"></ui-icon><ui-icon name="vol" style="margin-left:10px"></ui-icon><ui-icon name="bat" style="margin-left:9px"></ui-icon>
<div class="r" style="margin:0 11px 0 19px"><ui-text font="ui" size="14.500" w="35">18:01</ui-text><ui-text font="ui" size="14.500" w="78">29-04-2024</ui-text></div>
<ui-icon name="bell"></ui-icon><div class="co" style="margin-left:22px"><ui-icon name="copilot"></ui-icon><ui-text font="ui" size="8" weight="800" w="18">PRE</ui-text></div></div>`);

component('desktop-screen', `
:host{display:flex;flex-direction:column;width:1920px;height:1080px;overflow:hidden;position:relative}
main{display:flex;height:851px}
.help{position:absolute;left:1860px;top:961px;width:40px;height:40px;border-radius:50%;background:#1e1e1e;color:#fff;display:grid;place-items:center}`,
`<browser-tabs></browser-tabs><address-bar></address-bar><figma-toolbar></figma-toolbar>
<main><layers-panel></layers-panel><design-canvas></design-canvas><prototype-panel></prototype-panel></main>
<windows-taskbar></windows-taskbar>
<div class="help"><ui-text font="ui" size="24" weight="300">?</ui-text></div>`);
</script>
</body>
</html>
